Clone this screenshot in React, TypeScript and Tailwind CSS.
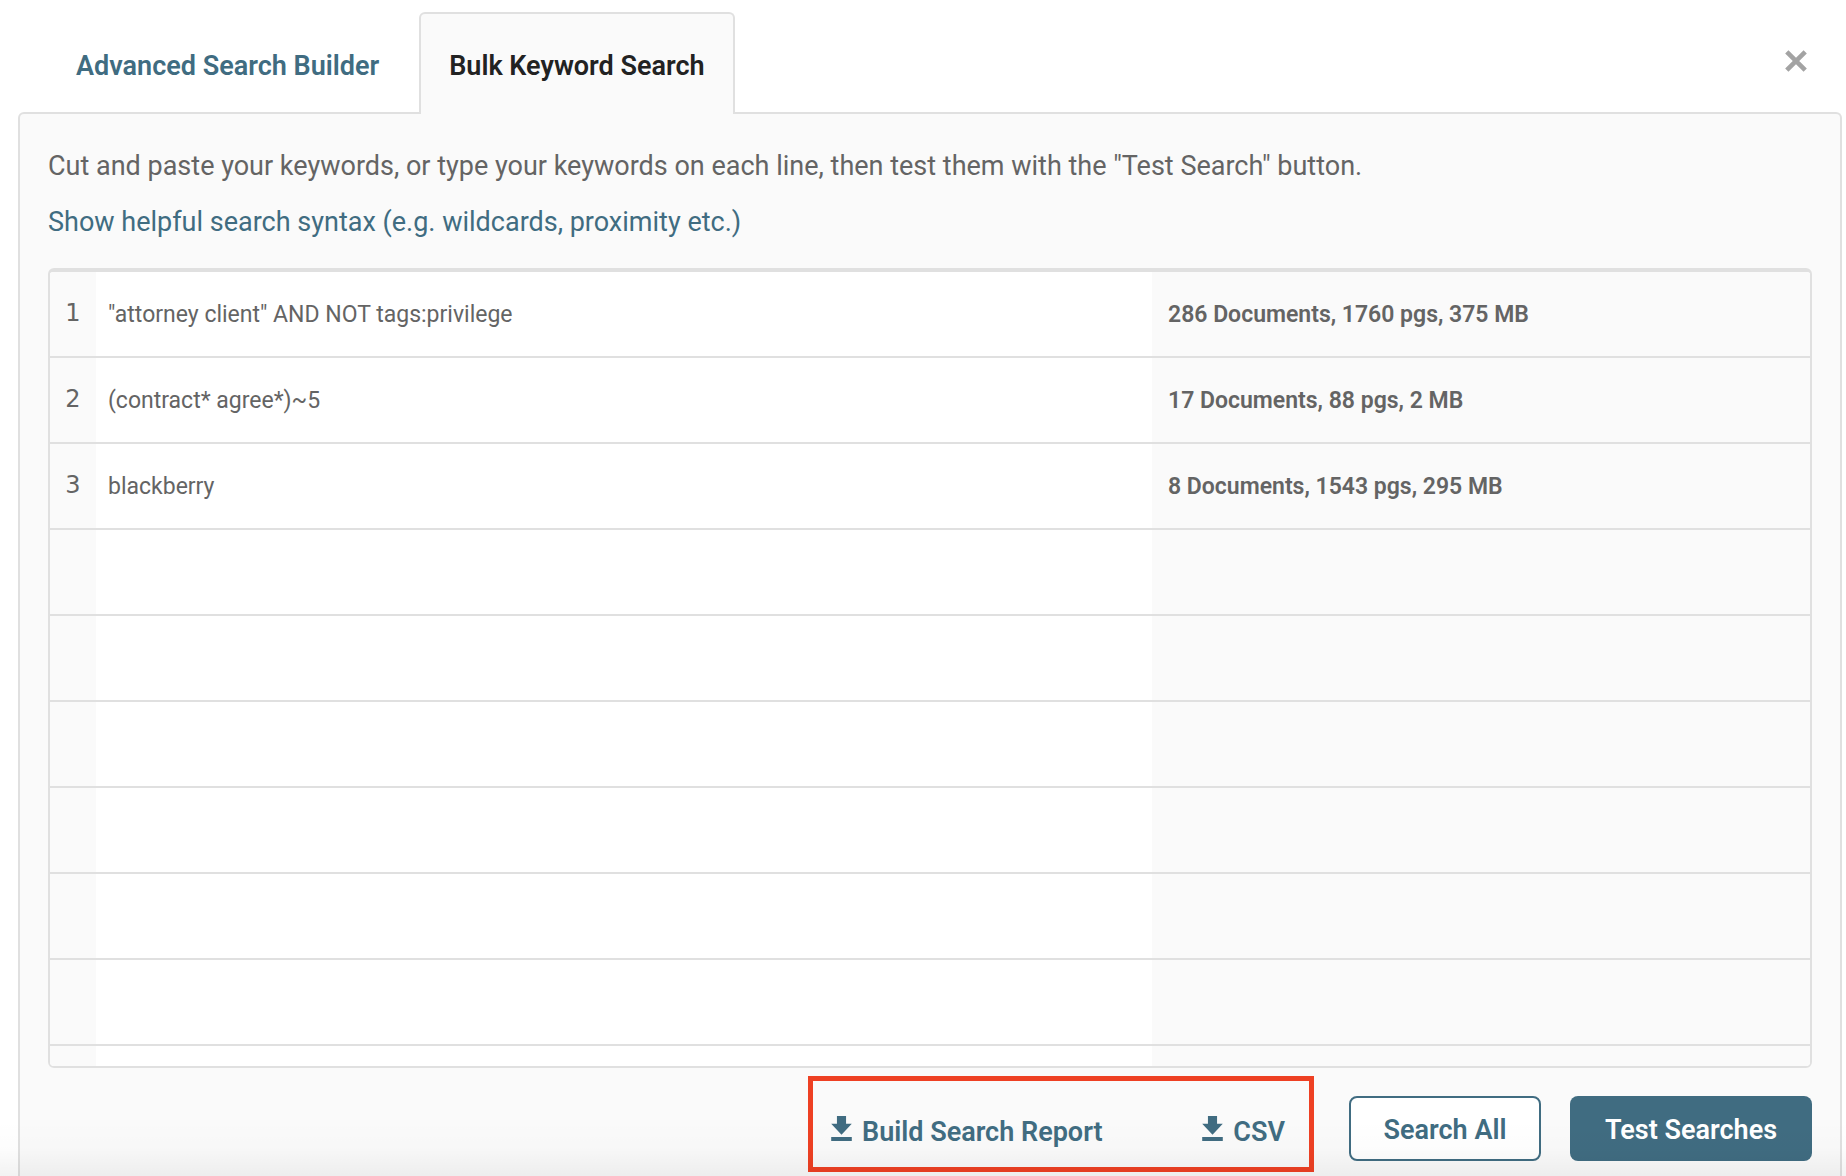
import { useState } from "react";

interface Keyword {
  query: string;
  result: string;
}

const keywords: Keyword[] = [
  { query: '"attorney client" AND NOT tags:privilege', result: "286 Documents, 1760 pgs, 375 MB" },
  { query: "(contract* agree*)~5", result: "17 Documents, 88 pgs, 2 MB" },
  { query: "blackberry", result: "8 Documents, 1543 pgs, 295 MB" },
];

const ROW_COUNT = 10;

function DownloadIcon() {
  return (
    <svg className="w-[21px] h-[25px] mb-2" viewBox="5 3 14 17" fill="currentColor" aria-hidden="true">
      <path d="M19 8.3h-3.9V3H8.9v5.3H5l7 7.5 7-7.5zM5 17.3V20h14v-2.7H5z" />
    </svg>
  );
}

function CloseIcon() {
  return (
    <svg className="w-[22px] h-[22px]" viewBox="0 0 22 22" stroke="currentColor" strokeWidth="4.6" aria-hidden="true">
      <path d="M1.8 1.8l18.4 18.4M20.2 1.8L1.8 20.2" />
    </svg>
  );
}

export default function App() {
  const [queries, setQueries] = useState<string[]>(
    Array.from({ length: ROW_COUNT }, (_, i) => keywords[i]?.query ?? "")
  );

  const updateQuery = (index: number, value: string) => {
    setQueries(queries.map((q, i) => (i === index ? value : q)));
  };

  return (
    <div className="relative h-screen overflow-hidden flex flex-col bg-white pt-3 pl-[18px] pr-1 font-['Roboto',sans-serif] text-[27px] leading-10 text-[#646464]">
      {/* Tabs */}
      <div className="flex items-start justify-between pl-7 pr-[35px]">
        <div role="tablist" className="flex gap-2.5 -mb-0.5">
          <button
            role="tab"
            aria-selected="false"
            className="h-[102px] px-7 pt-1 border-2 border-b-0 border-transparent font-semibold text-[#406c81]"
          >
            Advanced Search Builder
          </button>
          <button
            role="tab"
            aria-selected="true"
            className="relative z-10 h-[102px] px-7 pt-1 rounded-t-md border-2 border-b-0 border-[#e0e0e0] bg-[#fafafa] font-semibold text-[#222222]"
          >
            Bulk Keyword Search
          </button>
        </div>
        <button aria-label="Close" className="mt-[38px] text-[#a3a3a3]">
          <CloseIcon />
        </button>
      </div>

      {/* Panel */}
      <main className="flex-1 rounded-t-md border-2 border-b-0 border-[#e0e0e0] bg-[#fafafa] px-7 pt-8">
        <p>
          Cut and paste your keywords, or type your keywords on each line, then test them with the "Test
          Search" button.
        </p>
        <a href="#syntax" className="mt-4 block w-fit text-[#406c81]">
          Show helpful search syntax (e.g. wildcards, proximity etc.)
        </a>

        <div className="mt-[26px] h-[800px] overflow-hidden rounded-md border-2 border-t-4 border-[#e0e0e0] bg-white">
          <table className="w-full table-fixed border-separate border-spacing-0 text-[23px]">
            <colgroup>
              <col className="w-[46px]" />
              <col className="w-[60%]" />
              <col />
            </colgroup>
            <tbody>
              {queries.map((query, i) => (
                <tr key={i} className="h-[86px]">
                  <td className="border-b-2 border-[#e0e0e0] bg-[#fafafa] pb-0.5 text-center text-2xl font-['DejaVu_Sans',sans-serif]">
                    {i < keywords.length ? i + 1 : ""}
                  </td>
                  <td className="border-b-2 border-[#e0e0e0] px-3 pt-0.5">
                    <input
                      type="text"
                      aria-label={`Keyword ${i + 1}`}
                      value={query}
                      onChange={(e) => updateQuery(i, e.target.value)}
                      className="block w-full bg-transparent outline-none"
                    />
                  </td>
                  <td className="border-b-2 border-[#e0e0e0] bg-[#fafafa] px-4 pt-0.5 font-semibold">
                    {keywords[i]?.result}
                  </td>
                </tr>
              ))}
            </tbody>
          </table>
        </div>

        {/* Actions */}
        <div className="mt-2 flex items-start justify-end font-semibold text-[#406c81]">
          <div className="mr-[35px] flex h-24 w-[506px] items-center justify-between border-5 border-[#ee4023] pl-[18px] pr-6 pt-4">
            <button className="flex items-center gap-2.5">
              <DownloadIcon />
              Build Search Report
            </button>
            <button className="flex items-center gap-2.5">
              <DownloadIcon />
              CSV
            </button>
          </div>
          <button className="mt-5 mr-[29px] h-[65px] w-48 rounded-lg border-2 border-[#406c81] bg-white pt-0.5">
            Search All
          </button>
          <button className="mt-5 h-[65px] w-[242px] rounded-lg bg-[#406c81] pt-0.5 text-white">
            Test Searches
          </button>
        </div>
      </main>

      {/* Scroll shade */}
      <div className="pointer-events-none absolute inset-x-0 bottom-0 z-20 h-14 bg-linear-to-t from-black/5 via-black/1 to-transparent" />
    </div>
  );
}
